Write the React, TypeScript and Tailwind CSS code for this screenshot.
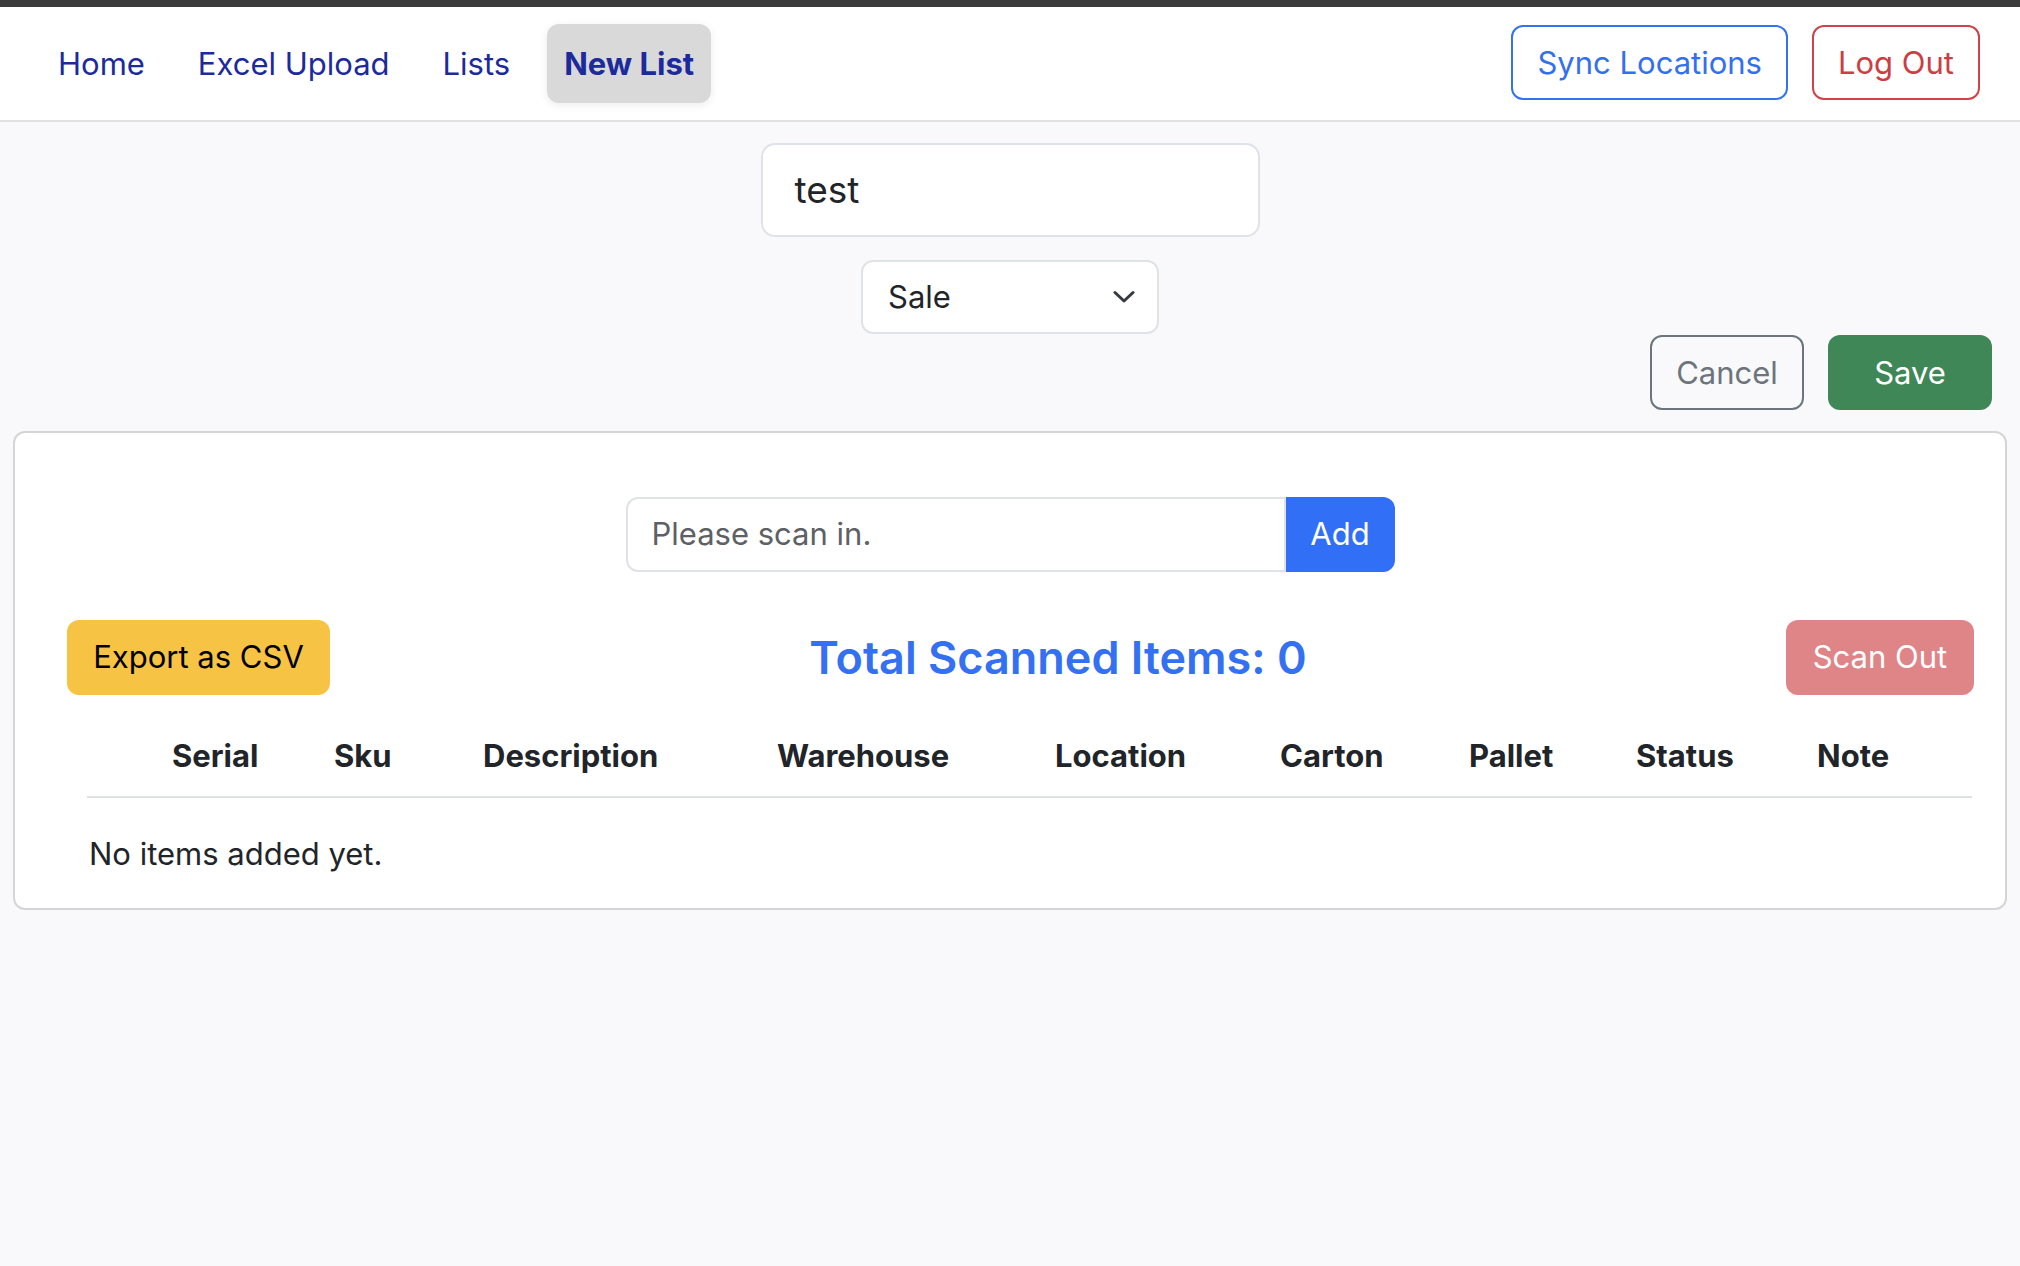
import React from "react";

const cols: { label: string; w: number }[] = [
  { label: "", w: 69 },
  { label: "Serial", w: 162 },
  { label: "Sku", w: 149 },
  { label: "Description", w: 294 },
  { label: "Warehouse", w: 278 },
  { label: "Location", w: 225 },
  { label: "Carton", w: 189 },
  { label: "Pallet", w: 167 },
  { label: "Status", w: 181 },
  { label: "Note", w: 171 },
];

export default function App() {
  return (
    <div
      className="min-h-[1266px] bg-[#f9f9fb] text-[#212529]"
      style={{ fontFamily: "Inter, 'Noto Sans', sans-serif" }}
    >
      <div className="h-[7px] bg-[#3b3b3b]" />
      <nav className="flex h-[115px] items-center justify-between border-b-2 border-[#e2e2e4] bg-white pl-[42px] pr-[40px]">
        <div className="flex items-center gap-[21px] text-[31px] leading-[45px] text-[#1c2a9c]">
          <a className="px-4 py-[17px]">Home</a>
          <a className="px-4 py-[17px]">Excel Upload</a>
          <a className="px-4 py-[17px]">Lists</a>
          <a className="rounded-[12px] bg-[#d9d9d9] px-[17px] py-[17px] font-bold shadow-[0_2px_8px_rgba(0,0,0,0.08)]">
            New List
          </a>
        </div>
        <div className="mt-[-3px] flex items-center gap-6 text-[31px] leading-[45px]">
          <button className="h-[75px] rounded-[12px] border-2 border-[#3472f0] px-[24px] text-[#3370f0]">
            Sync Locations
          </button>
          <button className="h-[75px] rounded-[12px] border-2 border-[#cf4349] px-[24px] text-[#cc3d44]">
            Log Out
          </button>
        </div>
      </nav>

      <div className="flex flex-col items-center pt-[21px]">
        <div className="flex h-[94px] w-[499px] items-center rounded-[14px] border-2 border-[#dfe2e6] bg-white px-[32px] text-[37px] text-[#212529]">
          test
        </div>
        <div className="mt-[23px] flex h-[74px] w-[298px] items-center justify-between rounded-[12px] border-2 border-[#dfe2e6] bg-white pl-[25px] pr-[22px] text-[31px]">
          <span>Sale</span>
          <svg width="22" height="14" viewBox="0 0 22 14" fill="none">
            <path d="M2 2.5 L11 11 L20 2.5" stroke="#343a40" strokeWidth="3" strokeLinecap="round" strokeLinejoin="round" />
          </svg>
        </div>
      </div>

      <div className="mt-[1px] flex justify-end gap-6 pr-[28px] text-[31px] leading-[45px]">
        <button className="h-[75px] w-[154px] rounded-[12px] border-2 border-[#6c757d] text-[#6c757d]">
          Cancel
        </button>
        <button className="h-[75px] w-[164px] rounded-[12px] bg-[#3f8757] text-white">
          Save
        </button>
      </div>

      <div className="mx-[13px] mt-[21px] rounded-[12px] border-2 border-[#d5d5d7] bg-white pb-[32px] pl-[52px] pr-[31px] pt-[64px]">
        <div className="flex justify-center">
          <div className="ml-[-21px] flex h-[75px] text-[31px]">
            <div className="flex w-[660px] items-center rounded-l-[12px] border-2 border-[#dfe2e6] bg-white pl-[24px] text-[#5d6065]">
              Please scan in.
            </div>
            <button className="w-[109px] rounded-r-[12px] bg-[#316ff6] text-white">Add</button>
          </div>
        </div>

        <div className="mt-[48px] flex items-center justify-between">
          <button className="h-[75px] w-[263px] rounded-[12px] bg-[#f6c344] text-[31px] text-black">
            Export as CSV
          </button>
          <h4 className="text-[45px] font-semibold leading-[54px] text-[#3370f2]">
            Total Scanned Items: 0
          </h4>
          <button className="h-[75px] w-[188px] rounded-[12px] bg-[#df8588] text-[31px] text-white">
            Scan Out
          </button>
        </div>

        <table className="ml-[20px] mt-[20px] table-fixed border-collapse text-[31px] leading-[45px]">
          <thead>
            <tr className="border-b-2 border-[#dee2e6]">
              {cols.map((c, i) => (
                <th
                  key={i}
                  style={{ width: c.w }}
                  className="py-[18px] pl-[16px] text-left font-bold text-[#212529]"
                >
                  {c.label}
                </th>
              ))}
            </tr>
          </thead>
        </table>
        <div className="ml-[22px] pt-[33px] text-[31px] leading-[45px] text-[#212529]">
          No items added yet.
        </div>
      </div>
    </div>
  );
}
